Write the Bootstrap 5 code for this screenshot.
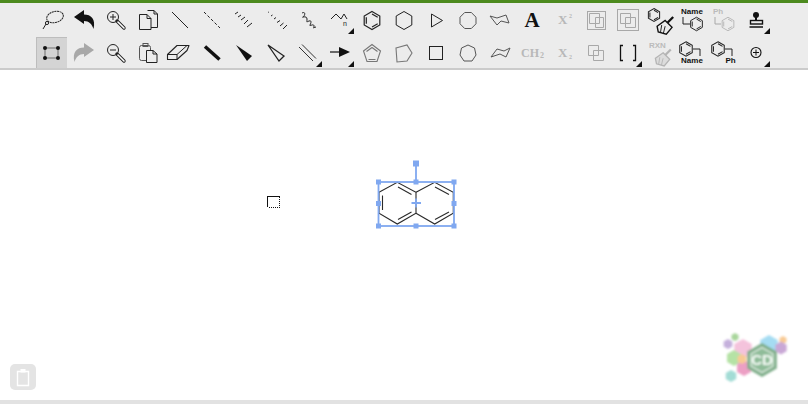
<!DOCTYPE html>
<html lang="en">
<head>
    <meta charset="UTF-8">
    <meta name="viewport" content="width=device-width, initial-scale=1.0">
    <link href="https://cdn.jsdelivr.net/npm/bootstrap@5.3.0/dist/css/bootstrap.min.css" rel="stylesheet">
    <title>Structure Editor</title>
    <style>
        html, body { height: 100%; overflow: hidden; background: #fff; font-family: "Liberation Sans", Arial, sans-serif; }
        .green-top { height: 3px; background: #4c8a1e; }
        .tool-strip { background: #ececec; border-bottom: 2px solid #cbcbcb; height: 67px; padding: 1px 0 0 36px; }
        .tool-grid { display: grid; grid-template-columns: repeat(23, 32px); grid-template-rows: 33px 31px; }
        .tool-cell { position: relative; width: 32px; height: 33px; }
        .tool-cell svg { display: block; }
        .tool-cell.picked { background: #d4d4d4; border-top: 1px solid #bdbdbd; border-left: 1px solid #bdbdbd; width: 31px; height: 31px; }
        .tool-cell.picked svg { margin: -1px 0 0 -1px; }
        .tool-cell.has-menu::after {
            content: ""; position: absolute; right: 2px; bottom: 3px;
            border-style: solid; border-width: 0 0 6px 6px; border-color: transparent transparent #111 transparent;
        }
        .ln { fill: none; stroke: #222; stroke-width: 1; }
        .gr { fill: none; stroke: #a8a8a8; stroke-width: 1; }
        .lbl { font-family: "Liberation Sans", Arial, sans-serif; font-weight: 700; font-size: 8px; fill: #111; }
        .lbl-off { fill: #bbb; }
        .serif-off { font-family: "Liberation Serif", serif; font-weight: 700; fill: #b8b8b8; }
        .draw-area { position: relative; flex: 1 1 auto; }
        .draw-area > svg.mol { position: absolute; left: 0; top: 0; }
        .clip-btn { position: absolute; left: 10px; bottom: 10px; width: 26px; height: 26px; background: #e4e4e4; border-radius: 5px; border: 0; padding: 0; }
        .logo-spot { position: absolute; right: 0; bottom: 0; }
        .foot-strip { height: 4px; background: #e2e2e2; }
        .sel { stroke: #80a8f0; stroke-width: 1.8; fill: none; }
        .grip { fill: #80a8f0; }
        .bond { stroke: #2a2a2a; stroke-width: 1.1; fill: none; }
    </style>
</head>
<body class="d-flex flex-column">
    <svg width="0" height="0" class="position-absolute">
        <defs>
            <g id="ben"><polygon points="0,-9 7.8,-4.5 7.8,4.5 0,9 -7.8,4.5 -7.8,-4.5"/><path d="M-5.7 -3.3V3.3M0 -6.6 5.7 -3.3M5.7 3.300 0 6.600"/></g>
            <path id="arrow-back" d="M6 13 16 6V10.5C23 10.5 28 15 25.5 25 24 20 21 17 16 17V20Z"/>
            <g id="broom"><path d="M8 0 3 5" stroke-width="2"/><path d="M1 3 7 9 2 15-5 13-6 8Z" stroke-width="1.2"/><path d="M-2 7-3 13M1 8-.5 14" stroke-width=".8"/></g>
            <polygon id="hx" points="0,-1 .87,-.5 .87,.5 0,1 -.87,.5 -.87,-.5"/>
        </defs>
    </svg>

    <div class="green-top"></div>
    <div class="tool-strip">
        <div class="tool-grid">
            <!-- row one -->
            <div class="tool-cell"><svg width="32" height="33"><g class="ln"><ellipse cx="19" cy="13" rx="8.500" ry="5.500" transform="rotate(-15 19 13)" stroke-dasharray="2 .6"/><circle cx="11" cy="19" r="1.600"/><path d="M10 20 7 25"/></g></svg></div>
            <div class="tool-cell"><svg width="32" height="33"><use href="#arrow-back" fill="#111"/></svg></div>
            <div class="tool-cell"><svg width="32" height="33"><circle cx="13" cy="13" r="5.500" class="ln" stroke-width="1.400"/><path d="M17 17 24 24" stroke="#222" stroke-width="3.400" stroke-linecap="round"/><path d="M18 18 24 24" stroke="#fff" stroke-width="1.600" stroke-linecap="round"/><path d="M10 13H16M13 10V16" class="ln"/></svg></div>
            <div class="tool-cell"><svg width="32" height="33"><g class="ln"><path d="M15.500 6.500H22L25.500 10V23.500H19"/><path d="M22 6.500V10H25.500"/><path d="M7.500 10.500H15L19 14.500V25.500H7.500Z"/><path d="M15 10.500V14.500H19"/></g></svg></div>
            <div class="tool-cell"><svg width="32" height="33"><path d="M8 8 24 24" class="ln" stroke="#444"/></svg></div>
            <div class="tool-cell"><svg width="32" height="33"><path d="M8 8 24 24" class="ln" stroke-dasharray="3 2"/></svg></div>
            <div class="tool-cell"><svg width="32" height="33"><path d="M7 10 10 8M10 13 13 11M13 16 17 13M16 20 20 16M19 23 24 19" class="ln"/></svg></div>
            <div class="tool-cell"><svg width="32" height="33"><path d="M8 8.500 8.800 8M11 12 12.500 11M14 15 16 13.500M17 18.500 20 16.500M20 22 23.500 19M23 25 27 21" class="ln"/></svg></div>
            <div class="tool-cell"><svg width="32" height="33"><path d="M10 9C14 7 13 12 11 13S15 11 15 15 14 18 17 17 19 19 18 21 22 19 22 22 20 24 24 23" class="ln" stroke-width="1.200"/></svg></div>
            <div class="tool-cell has-menu"><svg width="32" height="33"><path d="M7 15 12 10 17 15 20 10 23 15" class="ln"/><text x="19" y="22" style="font-family:'Liberation Sans',sans-serif;font-size:7px;fill:#222">n</text></svg></div>
            <div class="tool-cell"><svg width="32" height="33"><use href="#ben" class="ln" transform="translate(16 16.500)" style="stroke-width:1.200"/></svg></div>
            <div class="tool-cell"><svg width="32" height="33"><polygon points="16,7.500 23.800,12 23.800,21 16,25.500 8.200,21 8.200,12" class="ln"/></svg></div>
            <div class="tool-cell"><svg width="32" height="33"><polygon points="11.500,10 22.500,16.500 11.500,23" class="ln"/></svg></div>
            <div class="tool-cell"><svg width="32" height="33"><polygon points="12.700,8.500 19.300,8.500 24,13.200 24,19.800 19.300,24.500 12.700,24.500 8,19.800 8,13.200" fill="none" stroke="#555"/></svg></div>
            <div class="tool-cell"><svg width="32" height="33"><path d="M6 12 13 14 22 11 25 19 17 17 13 21Z" fill="none" stroke="#555"/></svg></div>
            <div class="tool-cell"><svg width="32" height="33"><text x="16" y="23" text-anchor="middle" style="font-family:'Liberation Serif',serif;font-weight:700;font-size:21px;fill:#111">A</text></svg></div>
            <div class="tool-cell"><svg width="32" height="33"><text x="10" y="20" class="serif-off" style="font-size:13px">X</text><text x="21" y="14" class="serif-off" style="font-size:6px">2</text></svg></div>
            <div class="tool-cell"><svg width="32" height="33"><g class="gr"><rect x="7.500" y="7.500" width="18" height="18"/><path d="M9.500 9.500H19.500V19.500H9.500ZM15.500 13.500H23.500V23.500H15.500Z"/></g></svg></div>
            <div class="tool-cell"><svg width="32" height="33"><g class="gr"><rect x="5.500" y="5.500" width="21" height="21"/><path d="M8.500 9.500H18.500V19.500H8.500ZM13.500 13.500H23.500V23.500H13.500Z"/></g></svg></div>
            <div class="tool-cell"><svg width="32" height="33"><use href="#ben" class="ln" transform="translate(10 11) scale(.72)" style="stroke-width:1.400"/><use href="#broom" transform="translate(20 13) scale(1.150)" stroke="#111" fill="#ececec"/></svg></div>
            <div class="tool-cell"><svg width="32" height="33"><text x="16" y="10" text-anchor="middle" class="lbl">Name</text><path d="M7 13V20H14" class="ln"/><use href="#ben" class="ln" transform="translate(20.500 20) scale(.75)" style="stroke-width:1.300"/></svg></div>
            <div class="tool-cell"><svg width="32" height="33"><text x="5" y="10" class="lbl lbl-off">Ph</text><path d="M7 13V20H13" class="gr"/><use href="#ben" class="gr" transform="translate(20 20) scale(.75)"/></svg></div>
            <div class="tool-cell has-menu"><svg width="32" height="33"><circle cx="16" cy="11" r="3" fill="#111"/><path d="M15 13H17V17H15Z" fill="#111"/><rect x="10.500" y="16.500" width="12" height="3.500" fill="none" stroke="#111" stroke-width="1.400"/><path d="M9.500 23H23" stroke="#111" stroke-width="1.500"/></svg></div>

            <!-- row two -->
            <div class="tool-cell picked"><svg width="32" height="33"><rect x="9" y="11" width="13" height="10" fill="none" stroke="#555" stroke-width=".8"/><g fill="#111"><circle cx="9" cy="11" r="2"/><circle cx="22" cy="11" r="2"/><circle cx="9" cy="21" r="2"/><circle cx="22" cy="21" r="2"/></g></svg></div>
            <div class="tool-cell"><svg width="32" height="33"><use href="#arrow-back" fill="#a8a8a8" transform="translate(32 0) scale(-1 1)"/></svg></div>
            <div class="tool-cell"><svg width="32" height="33"><circle cx="13" cy="13" r="5.500" class="ln" stroke-width="1.400"/><path d="M17 17 24 24" stroke="#222" stroke-width="3.400" stroke-linecap="round"/><path d="M18 18 24 24" stroke="#fff" stroke-width="1.600" stroke-linecap="round"/><path d="M10 13H16" class="ln"/></svg></div>
            <div class="tool-cell"><svg width="32" height="33"><g fill="none" stroke="#555"><rect x="7.500" y="8.500" width="11" height="15" rx="2"/><rect x="11" y="6.500" width="5" height="3"/><path d="M14.500 13.500H21L25 17V25.500H14.500Z" style="fill:#ececec;stroke:#222"/><path d="M21 13.500V17H25" style="stroke:#222"/></g></svg></div>
            <div class="tool-cell"><svg width="32" height="33"><g class="ln" stroke-linejoin="round"><path d="M3.500 17.500 13 8.500H25L23 13.500 13 22.500H3.500Z" style="stroke-width:1.100"/><path d="M3.500 17.500H13L23 8.500M13 17.500V22.500"/></g></svg></div>
            <div class="tool-cell"><svg width="32" height="33"><path d="M9 9.500 23.500 22.500" stroke="#111" stroke-width="3.500"/></svg></div>
            <div class="tool-cell"><svg width="32" height="33"><polygon points="8,8 24,19 19,24" fill="#111"/></svg></div>
            <div class="tool-cell"><svg width="32" height="33"><polygon points="8,8 24,19 19,24" class="ln" style="stroke-width:1.300"/></svg></div>
            <div class="tool-cell has-menu"><svg width="32" height="33"><path d="M7 10 21 24M10 7.500 24 21.500" fill="none" stroke="#333"/></svg></div>
            <div class="tool-cell has-menu"><svg width="32" height="33"><path d="M6 15H18" stroke="#111" stroke-width="1.200"/><polygon points="15,10 26,15 15,20" fill="#111"/></svg></div>
            <div class="tool-cell"><svg width="32" height="33"><g stroke="#777" fill="none" stroke-width="1.100"><polygon points="16,7.500 24.500,14 21,24.500 11,24.500 7.500,14"/><path d="M16 10.500 21.500 14.500M12.500 22.500H19.500M10.500 14.500 16 10.500"/></g></svg></div>
            <div class="tool-cell"><svg width="32" height="33"><polygon points="8,11 19,8 24,16 19,24 9,25" fill="none" stroke="#777" stroke-width="1.100"/></svg></div>
            <div class="tool-cell"><svg width="32" height="33"><rect x="9.500" y="9.500" width="13" height="13" class="ln"/></svg></div>
            <div class="tool-cell"><svg width="32" height="33"><polygon points="16,8 22.500,11 24,18 20,24 12,24 8,18 9.500,11" fill="none" stroke="#555"/></svg></div>
            <div class="tool-cell"><svg width="32" height="33"><path d="M7 20 13 12 20 14 26 11 22 20 16 17Z" fill="none" stroke="#555"/></svg></div>
            <div class="tool-cell"><svg width="32" height="33"><text x="5" y="20" class="serif-off" style="font-size:12px">CH</text><text x="24" y="21" class="serif-off" style="font-size:8px">2</text></svg></div>
            <div class="tool-cell"><svg width="32" height="33"><text x="10" y="20" class="serif-off" style="font-size:13px">X</text><text x="21" y="22" class="serif-off" style="font-size:6px">2</text></svg></div>
            <div class="tool-cell"><svg width="32" height="33"><path d="M8.500 8.500H18.500V18.500H8.500ZM13.500 13.500H23.500V23.500H13.500Z" class="gr"/></svg></div>
            <div class="tool-cell has-menu"><svg width="32" height="33"><path d="M11 8.500H8.500V23.500H11M21 8.500H23.500V23.500H21" fill="none" stroke="#111" stroke-width="1.300"/></svg></div>
            <div class="tool-cell"><svg width="32" height="33"><text x="5" y="11" class="lbl lbl-off">RXN</text><use href="#broom" transform="translate(18 12.500) scale(1.100)" stroke="#b4b4b4" fill="#dcdcdc"/></svg></div>
            <div class="tool-cell"><svg width="32" height="33"><use href="#ben" class="ln" transform="translate(10 12) scale(.8)" style="stroke-width:1.300"/><path d="M17 12H24V19" class="ln"/><text x="16" y="26" text-anchor="middle" class="lbl">Name</text></svg></div>
            <div class="tool-cell"><svg width="32" height="33"><use href="#ben" class="ln" transform="translate(10 12) scale(.8)" style="stroke-width:1.300"/><path d="M17 12H24V19" class="ln"/><text x="22.500" y="26" text-anchor="middle" class="lbl">Ph</text></svg></div>
            <div class="tool-cell has-menu"><svg width="32" height="33"><circle cx="16" cy="15.500" r="5" class="ln" style="stroke:#111;stroke-width:1.100"/><path d="M13 15.500H19M16 12.500V18.500" class="ln" style="stroke:#111"/></svg></div>
        </div>
    </div>

    <div class="draw-area">
        <!-- canvas coordinates: top of this area is y=70 in the window -->
        <svg class="mol" width="808" height="330" viewBox="0 70 808 330">
            <path d="M267.500 207V196.500H279.500" fill="none" stroke="#111" shape-rendering="crispEdges"/>
            <path d="M279.500 197V207.500H268" fill="none" stroke="#111" stroke-dasharray="1 1" shape-rendering="crispEdges"/>

            <g class="bond">
                <path d="M379 192.300 397.300 182.300 416 192.300V213.300L397.300 224 379 213.300Z"/>
                <path d="M416 192.300 434.700 182.300 453.300 192.300V213.300L434.700 224 416 213.300"/>
                <path d="M382.500 195.500V210M398 187 411.500 194.500M398 219.500 411.500 212M435 187 449 194.500M449 212 435 219.500"/>
            </g>
            <rect x="378.500" y="182" width="75.500" height="44" class="sel"/>
            <path d="M416 165V182M411.500 203H421M416 198.500V207.500" class="sel"/>
            <g class="grip">
                <rect x="413" y="160.500" width="6" height="6"/>
                <rect x="376" y="179.500" width="5" height="5"/><rect x="413.500" y="179.500" width="5" height="5"/><rect x="451.500" y="179.500" width="5" height="5"/>
                <rect x="376" y="201" width="5" height="5"/><rect x="451.500" y="201" width="5" height="5"/>
                <rect x="376" y="223.500" width="5" height="5"/><rect x="413.500" y="223.500" width="5" height="5"/><rect x="451.500" y="223.500" width="5" height="5"/>
            </g>
        </svg>

        <button type="button" class="clip-btn" aria-label="Clipboard">
            <svg width="26" height="26" class="d-block"><path d="M7.500 7.500H18.500V21.500H7.500Z" fill="none" stroke="#fff" stroke-width="1.400"/><rect x="10.500" y="5" width="5" height="3.500" fill="#fff"/></svg>
        </button>

        <svg class="logo-spot" width="98" height="75" viewBox="710 325 98 75">
            <defs><filter id="soft"><feGaussianBlur stdDeviation="1"/></filter></defs>
            <g filter="url(#soft)">
                <use href="#hx" transform="translate(728 344) scale(5)" fill="#c5b0dc"/>
                <use href="#hx" transform="translate(735 337) scale(4)" fill="#a8d69b"/>
                <use href="#hx" transform="translate(743 349) scale(10)" fill="#f4c3dc"/>
                <use href="#hx" transform="translate(734 358) scale(8)" fill="#b5e2a5"/>
                <use href="#hx" transform="translate(744 368) scale(8)" fill="#ec9fc4"/>
                <use href="#hx" transform="translate(742 359) scale(5)" fill="#f8ca95"/>
                <use href="#hx" transform="translate(731 376) scale(6)" fill="#a3dcd5"/>
                <use href="#hx" transform="translate(769 345) scale(10)" fill="#a5dcf2"/>
                <use href="#hx" transform="translate(783 340) scale(4)" fill="#f8ca95"/>
                <use href="#hx" transform="translate(781 348) scale(6.500)" fill="#c9a8d6"/>
                <use href="#hx" transform="translate(762 360) scale(17)" fill="#7fae8a"/>
                <use href="#hx" transform="translate(762 360) scale(12.500)" fill="#8fbc99" stroke="#e8f3ea" stroke-width=".1"/>
                <text x="762" y="365" text-anchor="middle" fill="#f4fbf5" style="font-family:'Liberation Sans',sans-serif;font-size:15px;font-weight:700">CD</text>
            </g>
        </svg>
    </div>
    <div class="foot-strip"></div>
</body>
</html>
